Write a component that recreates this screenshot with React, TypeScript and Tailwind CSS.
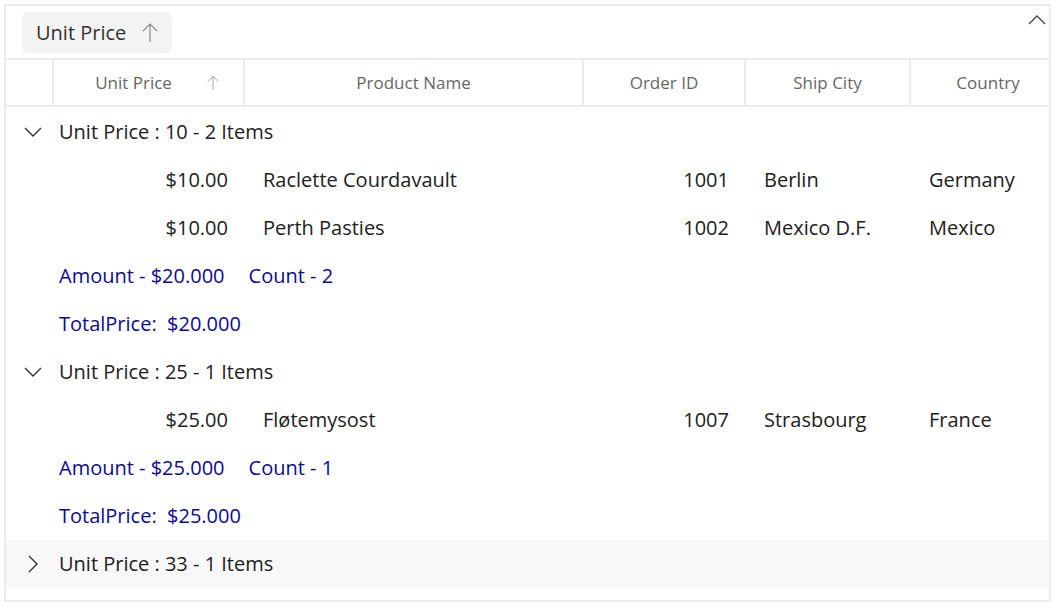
import React from 'react';

const FONT = "font-['Open_Sans','Noto_Sans',sans-serif]";

type Row = { price: string; name: string; id: string; city: string; country: string };

const ChevronDown = () => (
    <svg width="18" height="10" viewBox="0 0 18 10" fill="none" stroke="#333" strokeWidth="1.4">
        <path d="M1 1 L9 9 L17 1" />
    </svg>
);

const ChevronRight = () => (
    <svg width="10" height="18" viewBox="0 0 10 18" fill="none" stroke="#333" strokeWidth="1.4">
        <path d="M1 1 L9 9 L1 17" />
    </svg>
);

const UpArrow = ({ size = 16, color = '#8a8a8a' }: { size?: number; color?: string }) => (
    <svg width={size} height={size + 4} viewBox="0 0 16 20" fill="none" stroke={color} strokeWidth="1.2">
        <path d="M8 1 L8 19 M1 8 L8 1 L15 8" />
    </svg>
);

const cols = 'grid grid-cols-[48px_191px_339px_162px_165px_1fr]';

const GroupCaption = ({ label, open, shaded }: { label: string; open: boolean; shaded?: boolean }) => (
    <div className={`flex items-center h-12 pt-[2px] ${shaded ? 'bg-[#f8f8f8]' : ''}`}>
        <div className="w-[53px] flex justify-center">{open ? <ChevronDown /> : <ChevronRight />}</div>
        <span className="text-[20px] text-[#212121]">{label}</span>
    </div>
);

const DataRow = ({ r }: { r: Row }) => (
    <div className={`${cols} h-12 pt-[2px] items-center text-[20px] text-[#212121]`}>
        <div />
        <div className="text-right pr-[17px]">{r.price}</div>
        <div className="pl-[18px]">{r.name}</div>
        <div className="text-right pr-[17px]">{r.id}</div>
        <div className="pl-[18px]">{r.city}</div>
        <div className="pl-[18px]">{r.country}</div>
    </div>
);

const Summary = ({ amount, count }: { amount: string; count: number }) => (
    <>
        <div className="flex items-center h-12 pt-[2px] pl-[53px] text-[20px] text-[#0a0a96] gap-[24px]">
            <span>Amount - {amount}</span>
            <span>Count - {count}</span>
        </div>
        <div className="flex items-center h-12 pt-[2px] pl-[53px] text-[20px] text-[#0a0a96]">
            <span className="whitespace-pre">TotalPrice:  {amount}</span>
        </div>
    </>
);

const App: React.FC = () => {
    const headers = ['Unit Price', 'Product Name', 'Order ID', 'Ship City', 'Country'];
    return (
        <div className={`w-[1056px] h-[606px] bg-white pt-[4px] pl-[4px] ${FONT}`}>
            <div className="w-[1047px] h-[598px] border-2 border-[#ececec] flex flex-col overflow-hidden">
                {/* Group drop area */}
                <div className="h-[52px] flex items-center justify-between pl-[16px] pr-[3px]">
                    <div className="flex items-center h-[41px] w-[150px] rounded-md bg-[#f3f3f3] pl-[14px] pt-[1px] gap-[16px] text-[20px] text-[#333]">
                        <span>Unit Price</span>
                        <UpArrow size={16} color="#8c8c8c" />
                    </div>
                    <svg className="self-start mt-[9px]" width="18" height="10" viewBox="0 0 18 10" fill="none" stroke="#444" strokeWidth="1.3">
                        <path d="M1 9 L9 1 L17 9" />
                    </svg>
                </div>

                {/* Header */}
                <div className={`${cols} h-[49px] border-y-2 border-[#ececec] text-[17px] text-[#666]`}>
                    <div className="border-r-2 border-[#ececec]" />
                    {headers.map((h, i) => (
                        <div
                            key={h}
                            className={`flex items-center justify-center relative ${i < headers.length - 1 ? 'border-r-2 border-[#ececec]' : ''}`}
                        >
                            <span className={i === 0 ? 'mr-[30px]' : i === 4 ? 'ml-[16px]' : ''}>{h}</span>
                            {i === 0 && (
                                <span className="absolute right-[24px] top-[15px]">
                                    <UpArrow size={12} color="#9a9a9a" />
                                </span>
                            )}
                        </div>
                    ))}
                </div>

                {/* Body */}
                <GroupCaption label="Unit Price : 10 - 2 Items" open />
                <DataRow r={{ price: '$10.00', name: 'Raclette Courdavault', id: '1001', city: 'Berlin', country: 'Germany' }} />
                <DataRow r={{ price: '$10.00', name: 'Perth Pasties', id: '1002', city: 'Mexico D.F.', country: 'Mexico' }} />
                <Summary amount="$20.000" count={2} />
                <GroupCaption label="Unit Price : 25 - 1 Items" open />
                <DataRow r={{ price: '$25.00', name: 'Fløtemysost', id: '1007', city: 'Strasbourg', country: 'France' }} />
                <Summary amount="$25.000" count={1} />
                <GroupCaption label="Unit Price : 33 - 1 Items" open={false} shaded />
            </div>
        </div>
    );
};

export default App;
